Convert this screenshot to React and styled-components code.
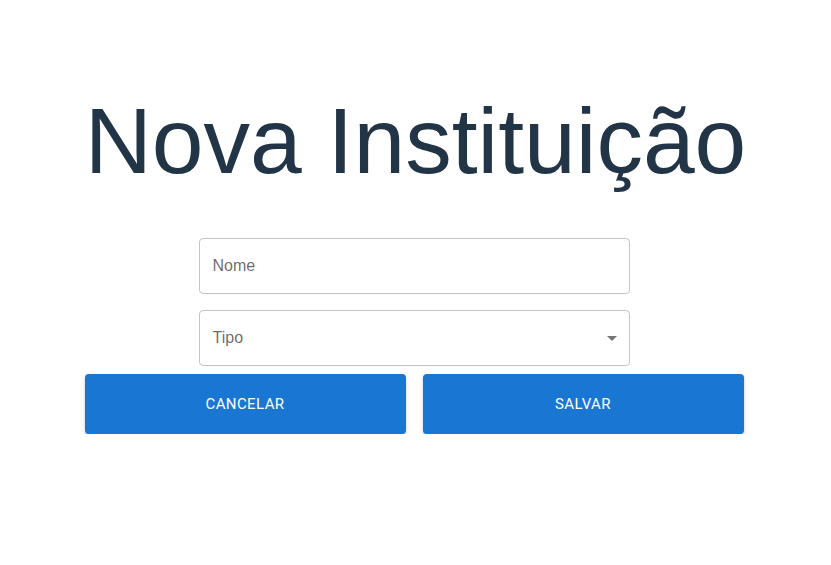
import React from "react";
import styled, { createGlobalStyle } from "styled-components";

const GlobalStyle = createGlobalStyle`
  body {
    margin: 0;
    background: #ffffff;
    font-family: "Liberation Sans", Arial, sans-serif;
  }
`;

const Page = styled.div`
  display: flex;
  flex-direction: column;
  align-items: center;
  padding-top: 88px;
`;

const Title = styled.h1`
  margin: 0;
  font-family: "Liberation Sans", Arial, sans-serif;
  font-weight: 400;
  font-size: 93px;
  line-height: 107px;
  color: #223547;
`;

const Form = styled.form`
  display: flex;
  flex-direction: column;
  align-items: center;
  width: 659px;
  margin-top: 43px;
  margin-right: 3px;
`;

const Field = styled.div`
  box-sizing: border-box;
  width: 431px;
  height: 56px;
  margin-bottom: ${props => props.gap || 0}px;
  border: 1px solid rgba(0, 0, 0, 0.23);
  border-radius: 4px;
  display: flex;
  align-items: center;
  padding: 0 14px 0 13px;
`;

const Label = styled.span`
  flex: 1;
  font-family: "Liberation Sans", Arial, sans-serif;
  font-size: 16px;
  color: rgba(0, 0, 0, 0.6);
`;

const Arrow = styled.svg`
  width: 24px;
  height: 24px;
  fill: rgba(0, 0, 0, 0.54);
  margin-right: -9px;
`;

const Actions = styled.div`
  display: flex;
  gap: 17px;
  width: 100%;
`;

const Button = styled.button`
  flex: 1;
  height: 60px;
  border: 0;
  border-radius: 4px;
  background: #1976d2;
  color: #ffffff;
  font-family: Roboto, "Liberation Sans", sans-serif;
  font-weight: 400;
  font-size: 15px;
  letter-spacing: 0.4px;
  text-transform: uppercase;
  box-shadow: 0px 3px 1px -2px rgba(0, 0, 0, 0.2),
    0px 2px 2px 0px rgba(0, 0, 0, 0.14), 0px 1px 5px 0px rgba(0, 0, 0, 0.12);
  cursor: pointer;
`;

export default function App() {
  return (
    <>
      <GlobalStyle />
      <Page>
        <Title>Nova Instituição</Title>
        <Form onSubmit={e => e.preventDefault()}>
          <Field gap={16}>
            <Label>Nome</Label>
          </Field>
          <Field gap={8}>
            <Label>Tipo</Label>
            <Arrow viewBox="0 0 24 24">
              <path d="M7 10l5 5 5-5z" />
            </Arrow>
          </Field>
          <Actions>
            <Button type="button">Cancelar</Button>
            <Button type="submit">Salvar</Button>
          </Actions>
        </Form>
      </Page>
    </>
  );
}
